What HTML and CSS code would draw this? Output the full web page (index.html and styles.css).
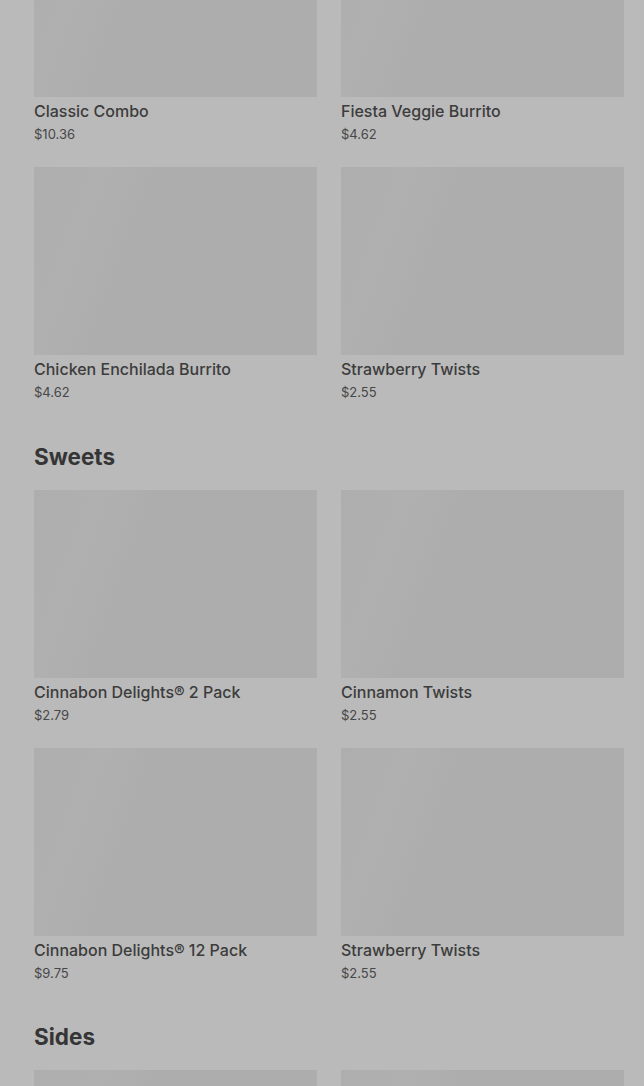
FILE: index.html
```html
<!DOCTYPE html>
<html lang="en">
<head>
<meta charset="utf-8">
<title>Menu</title>
<link rel="stylesheet" href="styles.css">
</head>
<body>
<main class="menu">
  <section class="section first">
    <div class="grid">
      <div class="card"><div class="thumb"></div><div class="name">Classic Combo</div><div class="price">$10.36</div></div>
      <div class="card"><div class="thumb"></div><div class="name">Fiesta Veggie Burrito</div><div class="price">$4.62</div></div>
      <div class="card"><div class="thumb"></div><div class="name">Chicken Enchilada Burrito</div><div class="price">$4.62</div></div>
      <div class="card"><div class="thumb"></div><div class="name">Strawberry Twists</div><div class="price">$2.55</div></div>
    </div>
  </section>
  <section class="section">
    <h2 class="title">Sweets</h2>
    <div class="grid">
      <div class="card"><div class="thumb"></div><div class="name">Cinnabon Delights® 2 Pack</div><div class="price">$2.79</div></div>
      <div class="card"><div class="thumb"></div><div class="name">Cinnamon Twists</div><div class="price">$2.55</div></div>
      <div class="card"><div class="thumb"></div><div class="name">Cinnabon Delights® 12 Pack</div><div class="price">$9.75</div></div>
      <div class="card"><div class="thumb"></div><div class="name">Strawberry Twists</div><div class="price">$2.55</div></div>
    </div>
  </section>
  <section class="section last">
    <h2 class="title">Sides</h2>
    <div class="grid">
      <div class="card"><div class="thumb"></div></div>
      <div class="card"><div class="thumb"></div></div>
    </div>
  </section>
</main>
</body>
</html>
```

FILE: styles.css
```css
html, body {
  margin: 0;
  padding: 0;
  background: #bababa;
  overflow: hidden;
}
body {
  font-family: Inter, "Noto Sans", "Liberation Sans", sans-serif;
  color: #3b3b3b;
}
.menu {
  padding: 0 20px 0 34px;
  margin-top: -91px;
}
.section {
  margin-top: 37px;
}
.section.first {
  margin-top: 0;
}
.section.last {
  margin-top: 36px;
}
.title {
  margin: 0 0 17px;
  font-size: 22.5px;
  line-height: 32px;
  font-weight: 700;
  color: #353535;
}
.grid {
  display: grid;
  grid-template-columns: 1fr 1fr;
  column-gap: 24px;
  row-gap: 21px;
}
.thumb {
  height: 188px;
  background: linear-gradient(110deg, #aeaeae 0%, #b0b0b0 20%, #adadad 35%, #adadad 100%);
}
.name {
  margin-top: 3px;
  font-size: 16px;
  line-height: 22px;
  font-weight: 500;
  color: #3c3c3c;
}
.price {
  font-size: 13px;
  line-height: 24px;
  color: #474747;
}
```
